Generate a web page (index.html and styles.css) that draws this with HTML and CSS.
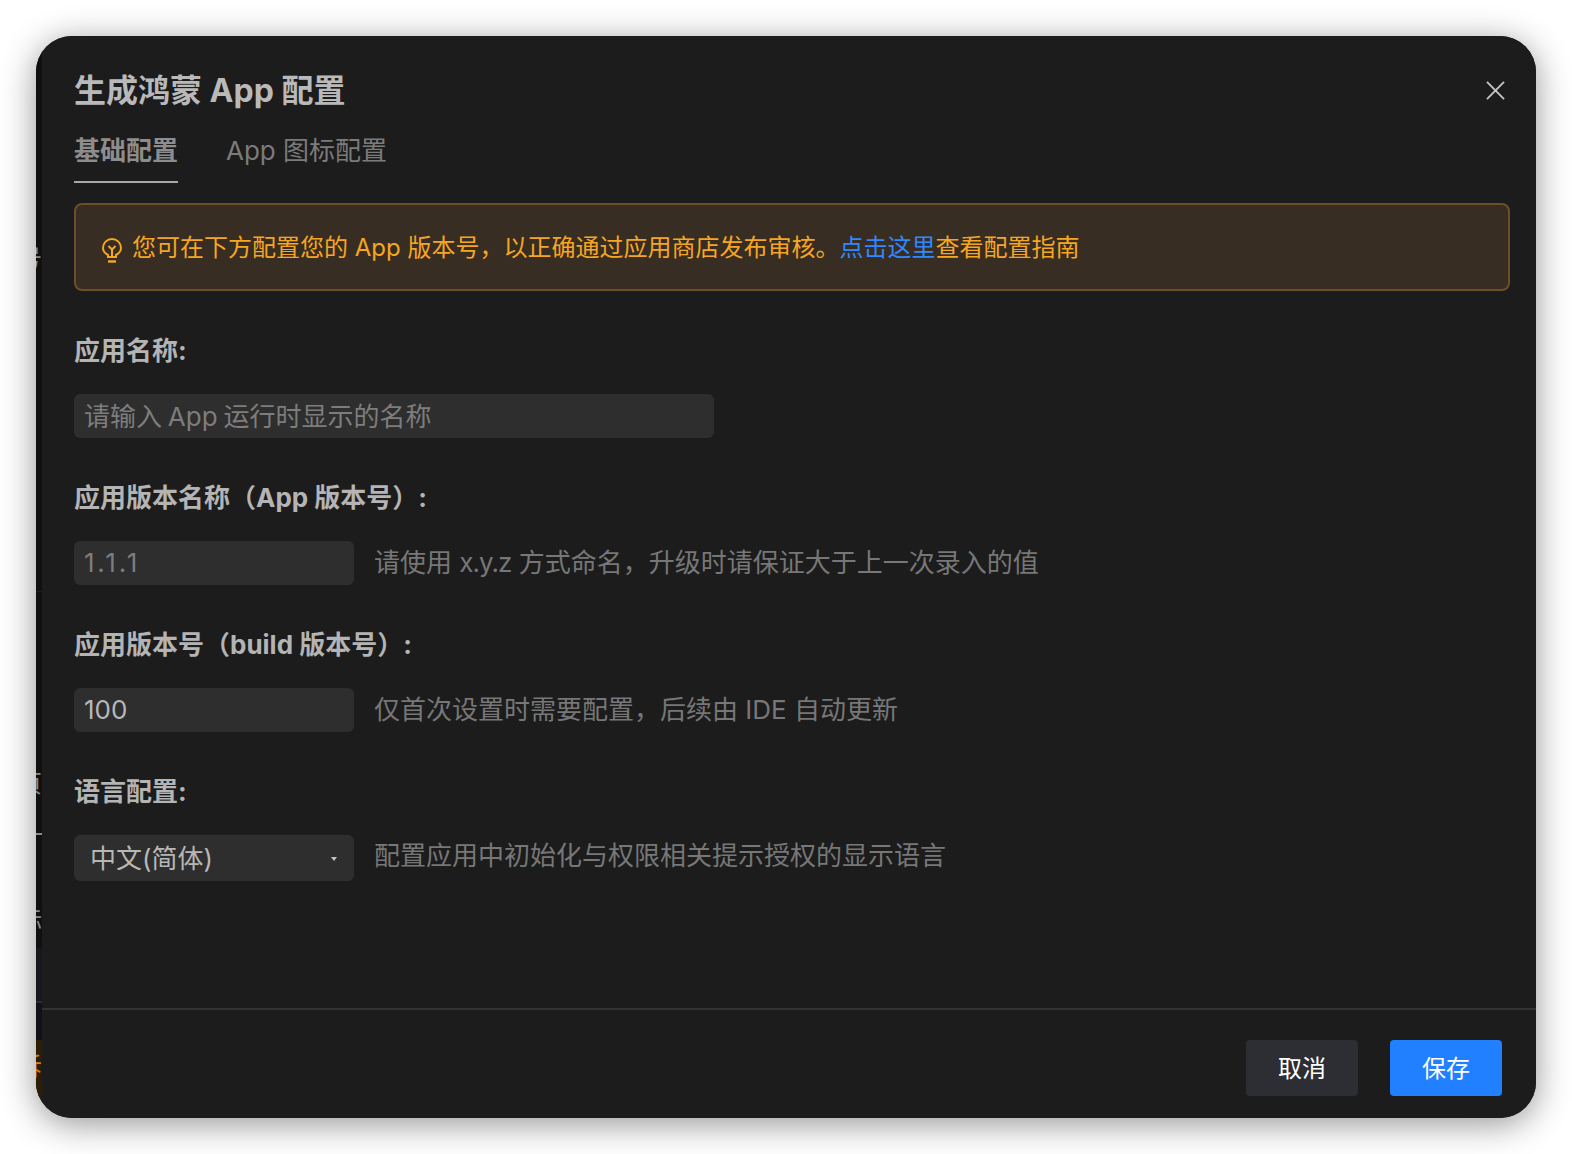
FILE: index.html
```html
<!DOCTYPE html>
<html lang="zh-CN">
<head>
<meta charset="utf-8">
<title>生成鸿蒙 App 配置</title>
<link rel="stylesheet" href="styles.css">
</head>
<body>
<div class="window">
  <div class="backdrop">
    <div class="bd-a"><span class="bd-glyph">号</span></div>
    <div class="bd-b"><span class="bd-glyph">页</span></div>
    <div class="bd-c"><span class="bd-glyph">标</span></div>
    <div class="bd-d"></div>
    <div class="bd-d2"></div>
    <div class="bd-e"><span class="bd-glyph bd-amber">诉</span></div>
  </div>
  <div class="dialog">
    <header class="head">
      <h1 class="title">生成鸿蒙 App 配置</h1>
      <svg class="close" viewBox="0 0 20 20" width="20" height="20"><path d="M1 1L19 19M19 1L1 19" fill="none" stroke="#c4c4c4" stroke-width="2"/></svg>
    </header>
    <nav class="tabs">
      <span class="tab active">基础配置</span>
      <span class="tab">App 图标配置</span>
    </nav>
    <div class="alert">
      <svg class="bulb" viewBox="0 0 20 26" width="20" height="26"><g fill="none" stroke="#f5a623" stroke-width="2"><path d="M6 19v-2.200C3 15.400 1 12.800 1 10a9 9 0 0 1 18 0c0 2.800-2 5.400-5 6.800V19z"/><path d="M6 23.500h8" stroke-width="2.400"/><path d="M10 18v-7M6.500 8l3.500 3.500L13.500 8"/></g></svg>
      <span>您可在下方配置您的 App 版本号，以正确通过应用商店发布审核。<a class="link">点击这里</a>查看配置指南</span>
    </div>
    <form class="form">
      <div class="label">应用名称:</div>
      <div class="field wide"><span class="ph zh">请输入 App 运行时显示的名称</span></div>
      <div class="label">应用版本名称（App 版本号）:</div>
      <div class="row">
        <div class="field"><span class="ph ver">1.1.1</span></div>
        <span class="hint">请使用 <span class="xyz">x.y.z</span> 方式命名，升级时请保证大于上一次录入的值</span>
      </div>
      <div class="label">应用版本号（build 版本号）:</div>
      <div class="row">
        <div class="field"><span class="val">100</span></div>
        <span class="hint">仅首次设置时需要配置，后续由 IDE 自动更新</span>
      </div>
      <div class="label">语言配置:</div>
      <div class="row top">
        <div class="select"><span class="val up">中文(简体)</span><i class="caret"></i></div>
        <span class="hint low">配置应用中初始化与权限相关提示授权的显示语言</span>
      </div>
    </form>
    <footer class="foot">
      <button class="btn cancel" type="button">取消</button>
      <button class="btn save" type="button">保存</button>
    </footer>
  </div>
</div>
</body>
</html>
```
FILE: styles.css
```css
* { box-sizing: border-box; }
html, body { margin: 0; padding: 0; height: 100%; overflow: hidden; background: #fff; }
body {
  padding: 36px;
  font-family: Inter, "Noto Sans CJK SC", "Noto Sans", sans-serif;
}
.window {
  display: flex;
  width: 1500px;
  height: 1082px;
  border-radius: 36px;
  overflow: hidden;
  background: #1c1c1c;
  box-shadow: 0 6px 34px rgba(0, 0, 0, 0.42);
}
.backdrop {
  flex: 0 0 6px;
  display: flex;
  flex-direction: column;
  overflow: hidden;
  background: #101010;
  color: #8a8a8a;
  font-size: 24px;
  line-height: 30px;
}
.bd-glyph { display: block; width: 24px; margin-left: -18px; }
.bd-a { height: 556px; padding-top: 208px; border-bottom: 1px solid #1c1c1c; }
.bd-b { height: 243px; padding-top: 177px; border-bottom: 2px solid #8a8a8a; }
.bd-c { height: 113px; padding-top: 71px; }
.bd-d { height: 55px; background: #17181b; border-bottom: 2px solid #2c2c2c; }
.bd-d2 { height: 37px; background: #101216; }
.bd-e { flex: 1; padding-top: 12px; background: #2c1d05; }
.bd-amber { color: #c8821e; }
.dialog {
  flex: 1;
  min-width: 0;
  display: flex;
  flex-direction: column;
  background: #1c1c1c;
}
.head {
  display: flex;
  align-items: center;
  justify-content: space-between;
  height: 40px;
  margin-top: 35px;
  padding: 0 30px 0 32px;
}
.title {
  margin: 0;
  font-size: 32px;
  line-height: 40px;
  font-weight: 700;
  color: #b9b9b9;
}
.close { display: block; width: 19px; height: 19px; margin: 0 1px 2px 0; }
.tabs {
  display: flex;
  gap: 48px;
  height: 67px;
  margin-top: 20px;
  padding-left: 32px;
}
.tab {
  height: 52px;
  font-size: 26px;
  line-height: 40px;
  color: #7b7b7b;
}
.tab.active {
  width: 104px;
  font-weight: 700;
  color: #8d8d8d;
  border-bottom: 2px solid #a8a8a8;
}
.alert {
  display: flex;
  align-items: center;
  gap: 10px;
  height: 88px;
  margin: 5px 26px 0 32px;
  padding: 0 26px 3px;
  border: 2px solid #6a4f28;
  border-radius: 8px;
  background: #382d22;
  font-size: 24px;
  color: #f5a623;
}
.link { color: #2f88ff; }
.bulb { flex: none; margin-top: 10px; }
.form {
  display: flex;
  flex-direction: column;
  padding-left: 32px;
}
.label {
  height: 40px;
  margin: 40px 0 23px;
  font-size: 26px;
  line-height: 40px;
  font-weight: 700;
  color: #b4b4b4;
}
.field {
  display: flex;
  align-items: center;
  width: 280px;
  height: 44px;
  padding: 0 10px 2px;
  border-radius: 6px;
  background: #2e2e2e;
  font-size: 26px;
}
.field.wide { width: 640px; }
.ph { color: #7d7d7d; }
.ph.zh { margin-top: -2px; word-spacing: -1.500px; }
.ph.ver { letter-spacing: 2.750px; }
.val { color: #b7b7b7; }
.val.up { margin-top: -4px; }
.row { display: flex; align-items: center; gap: 20px; }
.row.top { align-items: flex-start; }
.hint { font-size: 26px; line-height: 40px; color: #777; }
.xyz { letter-spacing: -1px; }
.hint.low { margin-top: 1px; }
.select {
  display: flex;
  align-items: center;
  justify-content: space-between;
  width: 280px;
  height: 46px;
  padding: 0 16px 0 16px;
  border-radius: 6px;
  background: #2e2e2e;
  font-size: 26px;
}
.caret {
  width: 0;
  height: 0;
  margin: 2px 1px 0 0;
  border-left: 3.500px solid transparent;
  border-right: 3.500px solid transparent;
  border-top: 4px solid #c4c4c4;
}
.foot {
  display: flex;
  justify-content: flex-end;
  gap: 32px;
  margin-top: auto;
  height: 110px;
  padding: 30px 34px 0 0;
  border-top: 2px solid #333;
}
.btn {
  width: 112px;
  height: 56px;
  padding: 0 0 4px;
  border: 0;
  border-radius: 4px;
  font: inherit;
  font-size: 24px;
  color: #fff;
}
.cancel { background: #2c2e33; }
.save { background: #2080ff; }
```
